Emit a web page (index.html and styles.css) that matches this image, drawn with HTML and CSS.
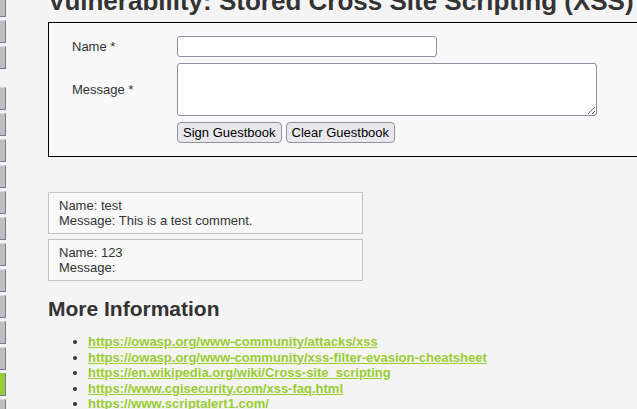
FILE: index.html
```
<!DOCTYPE html>
<html lang="en">
<head>
<meta charset="utf-8">
<title>Vulnerability: Stored Cross Site Scripting (XSS)</title>
<link rel="stylesheet" href="styles.css">
</head>
<body>
<div class="page">
  <nav class="menu">
    <ul class="menu-group">
      <li class="menu-item"></li>
      <li class="menu-item"></li>
      <li class="menu-item"></li>
    </ul>
    <ul class="menu-group">
      <li class="menu-item"></li>
      <li class="menu-item"></li>
      <li class="menu-item"></li>
      <li class="menu-item"></li>
      <li class="menu-item"></li>
      <li class="menu-item"></li>
      <li class="menu-item"></li>
      <li class="menu-item"></li>
      <li class="menu-item"></li>
      <li class="menu-item"></li>
      <li class="menu-item"></li>
      <li class="menu-item menu-item-selected"></li>
      <li class="menu-item"></li>
    </ul>
  </nav>
  <main class="content">
    <h1 class="title">Vulnerability: Stored Cross Site Scripting (XSS)</h1>
    <div class="code-area">
      <form class="guest-form" name="guestform">
        <label class="field-label" for="txtName">Name *</label>
        <input class="text-input" id="txtName" name="txtName" type="text" maxlength="10">
        <label class="field-label" for="mtxMessage">Message *</label>
        <textarea class="text-area" id="mtxMessage" name="mtxMessage" maxlength="50"></textarea>
        <span></span>
        <div class="buttons">
          <button class="btn" type="button">Sign Guestbook</button>
          <button class="btn" type="button">Clear Guestbook</button>
        </div>
      </form>
    </div>
    <div class="comments">
      <div class="comment">Name: test<br>Message: This is a test comment.</div>
      <div class="comment">Name: 123<br>Message: </div>
    </div>
    <h2 class="subtitle">More Information</h2>
    <ul class="links">
      <li><a href="#">https://owasp.org/www-community/attacks/xss</a></li>
      <li><a href="#">https://owasp.org/www-community/xss-filter-evasion-cheatsheet</a></li>
      <li><a href="#">https://en.wikipedia.org/wiki/Cross-site_scripting</a></li>
      <li><a href="#">https://www.cgisecurity.com/xss-faq.html</a></li>
      <li><a href="#">https://www.scriptalert1.com/</a></li>
    </ul>
  </main>
</div>
</body>
</html>
```
FILE: styles.css
```
html, body {
  margin: 0;
  padding: 0;
  overflow: hidden;
  background: #f4f4f4;
}

body {
  font-family: "Liberation Sans", Arial, sans-serif;
  font-size: 13px;
  color: #333;
}

.page {
  display: flex;
  align-items: flex-start;
}

.menu {
  width: 6px;
  flex-shrink: 0;
  margin-top: -6px;
}

.menu-group {
  list-style: none;
  margin: 0 0 18px 0;
  padding: 0;
  display: flex;
  flex-direction: column;
  gap: 3px;
}

.menu-item {
  box-sizing: border-box;
  height: 23px;
  background: #bfbfbf;
  border-top: 1px solid #d6d6d6;
  border-right: 1px solid #6b7a9c;
  border-bottom: 1px solid #6b7a9c;
}

.menu-item-selected {
  background: #99cc33;
  border-top-color: #99cc33;
}

.content {
  margin-left: 42px;
  width: 640px;
  flex-shrink: 0;
}

.title {
  margin: -14px 0 6px 0;
  font-size: 26px;
  line-height: 30px;
  font-weight: bold;
  color: #333;
  white-space: nowrap;
}

.code-area {
  border: 1px solid #000;
  background: #f8f8f8;
  padding: 13px 0 13px 23px;
}

.guest-form {
  display: grid;
  grid-template-columns: 105px auto;
  row-gap: 6px;
  align-items: center;
  justify-items: start;
}

.field-label {
  color: #333;
}

.text-input {
  box-sizing: border-box;
  width: 260px;
  height: 21px;
  border: 1px solid #8f8f9d;
  border-radius: 3px;
  background: #fff;
  margin: 0;
  padding: 0 3px;
  font: 13px "Liberation Sans", Arial, sans-serif;
}

.text-area {
  box-sizing: border-box;
  display: block;
  width: 420px;
  height: 53px;
  border: 1px solid #8f8f9d;
  border-radius: 3px;
  background: #fff;
  margin: 0;
  padding: 2px;
  font: 13px "Liberation Mono", monospace;
}

.buttons {
  display: flex;
  gap: 4px;
}

.btn {
  box-sizing: border-box;
  height: 21px;
  margin: 0;
  padding: 0 5px;
  border: 1px solid #8f8f9d;
  border-radius: 4px;
  background: #e9e9ed;
  color: #000;
  font: 13px "Liberation Sans", Arial, sans-serif;
  line-height: 17px;
}

.comments {
  margin-top: 35px;
  display: flex;
  flex-direction: column;
  gap: 5px;
}

.comment {
  width: 293px;
  padding: 5px 10px;
  border: 1px solid #c4c4c4;
  background: #f8f8f8;
  line-height: 15px;
  color: #333;
}

.subtitle {
  margin: 16px 0 0 0;
  font-size: 21px;
  line-height: 24px;
  font-weight: bold;
  color: #333;
}

.links {
  margin: 13px 0 0 0;
  padding-left: 40px;
  line-height: 15.5px;
}

.links a {
  color: #99cc33;
  font-weight: bold;
  text-decoration: underline;
}
```
